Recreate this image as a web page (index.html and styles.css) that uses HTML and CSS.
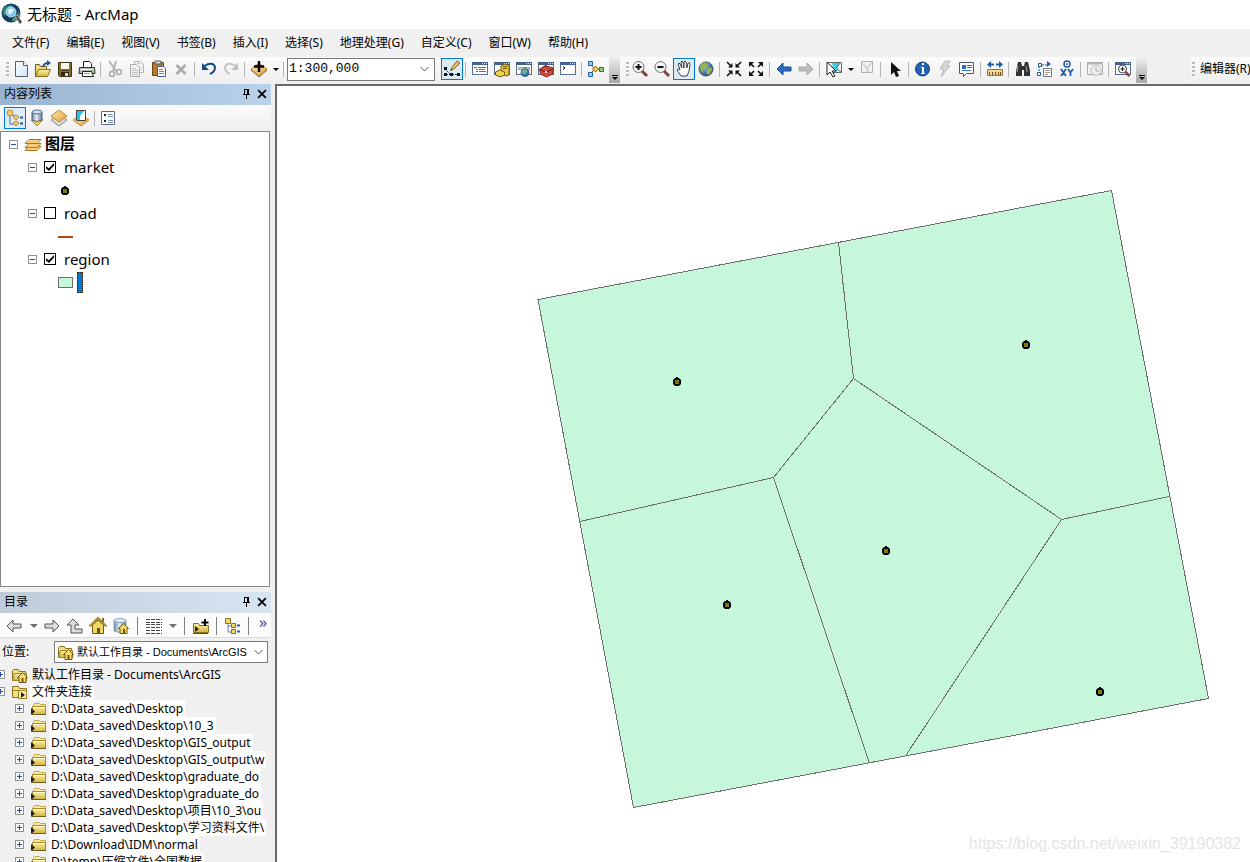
FILE: index.html
```html
<!DOCTYPE html>
<html lang="zh-CN">
<head>
<meta charset="utf-8">
<title>无标题 - ArcMap</title>
<link rel="stylesheet" href="styles.css">
</head>
<body>
<svg class="defs" aria-hidden="true">
  <defs>
    <linearGradient id="gold" x1="0" y1="0" x2="0" y2="1"><stop offset="0" stop-color="#fff3a8"/><stop offset="1" stop-color="#d3b23c"/></linearGradient>
    <linearGradient id="amber" x1="0" y1="0" x2="1" y2="1"><stop offset="0" stop-color="#ffe9a8"/><stop offset="1" stop-color="#e0a040"/></linearGradient>
    <linearGradient id="steel" x1="0" y1="0" x2="1" y2="0"><stop offset="0" stop-color="#6a86a6"/><stop offset=".45" stop-color="#e4eef8"/><stop offset="1" stop-color="#5a7898"/></linearGradient>
    <linearGradient id="page" x1="0" y1="0" x2="1" y2="1"><stop offset="0" stop-color="#fff"/><stop offset="1" stop-color="#cfe2f6"/></linearGradient>
    <radialGradient id="sea" cx=".35" cy=".3" r=".8"><stop offset="0" stop-color="#9cc8f4"/><stop offset="1" stop-color="#12408c"/></radialGradient>
  </defs>
  <symbol id="plus" viewBox="0 0 9 9"><rect x=".5" y=".5" width="8" height="8" fill="#fafafa" stroke="#919191"/><path d="M2 4.500h5M4.500 2v5" stroke="#2d4ea0"/></symbol>
  <symbol id="minus" viewBox="0 0 9 9"><rect x=".5" y=".5" width="8" height="8" fill="#fafafa" stroke="#919191"/><path d="M2 4.500h5" stroke="#2d4ea0"/></symbol>
  <symbol id="folder" viewBox="0 0 18 16"><path d="M3.500 4.500v-1l1-1h5l1 1h5v3h-12z" fill="#f7eaa0" stroke="#c2a94c"/><path d="M2.500 5.500h13v8h-13z" fill="url(#gold)" stroke="#a78a2c"/><path d="M2 13.500h14" stroke="#6d5b20"/><path d="M3 6.500h12" stroke="#fffbd6"/><path d="M1 7l4 3.500L1 14z" fill="#222"/></symbol>
  <symbol id="homefolder" viewBox="0 0 18 16"><path d="M1.500 13.500v-10l1-1h5l1 2h6v3M1.500 13.500h7" fill="#f2e08a" stroke="#8b711c"/><path d="M1.500 13.500l2-7h12v7z" fill="url(#gold)" stroke="#a1852a"/><path d="M6.500 10.500l5-5 5 5h-1.500v5H8v-5z" fill="#f5dc70" stroke="#6f5812"/><path d="M10.500 15v-4h2v4z" fill="#7a5c14"/></symbol>
  <symbol id="connfolder" viewBox="0 0 18 16"><path d="M1.500 13.500v-11h6l1 2h7v9z" fill="#f2e08a" stroke="#8b711c"/><path d="M2 6.500h13" stroke="#a1852a"/><rect x="7.500" y="6.500" width="8" height="8" fill="#fbefa8" stroke="#a1852a"/><path d="M10 8l4 3-4 3z" fill="#222"/></symbol>
  <symbol id="pin" viewBox="0 0 9 10"><path d="M2.500 0v5.500M2 .5h4.500M1 5.500h7M4.500 6v4" stroke="#000" fill="none"/><path d="M6 0v5.500" stroke="#000" stroke-width="2"/></symbol>
  <symbol id="close" viewBox="0 0 9 9"><path d="M1 1l7 7M8 1L1 8" stroke="#000" stroke-width="1.600"/></symbol>
  <symbol id="window" viewBox="0 0 22 22"><rect x="3.500" y="4.500" width="15" height="12" fill="#fff" stroke="#5b6f8d"/><rect x="3" y="4" width="16" height="3" fill="#44618c"/><path d="M13 5.500h1M15 5.500h1M17 5.500h1" stroke="#dce8f6"/></symbol>
  <symbol id="chevron" viewBox="0 0 9 6"><path d="M.5 1l4 4 4-4" fill="none" stroke="#555"/></symbol>
</svg>

<header class="titlebar">
  <svg class="logo" viewBox="0 0 22 22"><circle cx="10" cy="10" r="9.500" fill="#123d63"/><path d="M3 5q5-5 9-2l-3 4-4 2-1 5Q0 10 3 5z" fill="#2f8d77"/><path d="M12 15q5-3 6-7 2 6-2 9-3 2-5 1z" fill="#4d9a6b"/><circle cx="10" cy="9" r="5" fill="#7cc4e4" stroke="#cfe4ec"/><path d="M7 7q3-3 6 0l-2 3-3 2z" fill="#e4f6fb"/><path d="M14 13l2-1 5 7-2 2z" fill="#3c3c3c" stroke="#aaa"/></svg>
  <h1>无标题 - ArcMap</h1>
</header>

<nav class="menubar">
  <button>文件(F)</button><button>编辑(E)</button><button>视图(V)</button><button>书签(B)</button><button>插入(I)</button><button>选择(S)</button><button>地理处理(G)</button><button>自定义(C)</button><button>窗口(W)</button><button>帮助(H)</button>
</nav>

<div class="toolbars">
  <div class="toolbar">
    <span class="grip"></span>
    <button class="tool" aria-label="新建"><svg viewBox="0 0 22 22"><path d="M5.500 3.500h8l4 4v11h-12z" fill="url(#page)" stroke="#555e6c"/><path d="M13.500 3.500v4h4" fill="#fff" stroke="#555e6c"/></svg></button>
    <button class="tool" aria-label="打开"><svg viewBox="0 0 22 22"><path d="M3.500 18.500v-12h4l1 2h6v4" fill="#f2dc80" stroke="#6e5a20"/><path d="M3.500 18.500l3-7h12l-3 7z" fill="url(#gold)" stroke="#8b711c"/><path d="M11 9q1-4 5-4" fill="none" stroke="#1e5896" stroke-width="2"/><path d="M15 2l4 3-4 3z" fill="#1e5896"/></svg></button>
    <button class="tool" aria-label="保存"><svg viewBox="0 0 22 22"><path d="M4.500 4.500h13v14h-12l-1-1z" fill="#82702c" stroke="#3d3413"/><path d="M7 5h8v6H7z" fill="#f8f8f0"/><path d="M7 12.500h8" stroke="#4b4018"/><path d="M7 14h8v4H7z" fill="#302b16"/><path d="M11 15h3v3h-3z" fill="#ddd"/></svg></button>
    <button class="tool" aria-label="打印"><svg viewBox="0 0 22 22"><path d="M7.500 9V3.500h6l2 2V9" fill="#fff" stroke="#222"/><path d="M3.500 9.500h15l.5 6H3z" fill="#b8b8b8" stroke="#333"/><path d="M4 11.500h14" stroke="#eee"/><path d="M6.500 13.500h9l2 5h-11z" fill="#fff" stroke="#222"/><path d="M8 15.500h6" stroke="#999"/><path d="M15 12.500h2" stroke="#59b530"/></svg></button>
    <span class="sep"></span>
    <button class="tool" aria-label="剪切"><svg viewBox="0 0 22 22"><path d="M5 3l8 11M12 3l-3 10" stroke="#b5b5b5" stroke-width="2" fill="none"/><circle cx="8" cy="16" r="2.500" fill="none" stroke="#aaa" stroke-width="1.500"/><circle cx="15" cy="14" r="2.500" fill="none" stroke="#aaa" stroke-width="1.500"/></svg></button>
    <button class="tool" aria-label="复制"><svg viewBox="0 0 22 22"><path d="M8.500 3.500h6l3 3v8h-9z" fill="#f4f4f4" stroke="#b4b4b4"/><path d="M4.500 6.500h6l3 3v9h-9z" fill="#f4f4f4" stroke="#aaa"/><path d="M6 10.500h4M6 12.500h6M6 14.500h6M6 16.500h6M11 5.500h3M15 9.500h1M15 11.500h1" stroke="#bbb"/></svg></button>
    <button class="tool" aria-label="粘贴"><svg viewBox="0 0 22 22"><path d="M4.500 4.500h11v13h-11z" fill="#b8792e" stroke="#6b451a"/><path d="M7 3h6v3H7z" fill="#ddd" stroke="#555"/><path d="M9.500 8.500h6l2 2v8h-8z" fill="#fff" stroke="#44618c"/><path d="M11 11.500h4M11 13.500h5M11 15.500h5" stroke="#5c86c4"/></svg></button>
    <button class="tool" aria-label="删除"><svg viewBox="0 0 22 22"><path d="M6.500 7l9 9M15.500 7l-9 9" stroke="#aaa" stroke-width="2.500"/></svg></button>
    <span class="sep"></span>
    <button class="tool" aria-label="撤销"><svg viewBox="0 0 22 22"><path d="M6 8q9-5 11 1 0 5-5 7" fill="none" stroke="#174c8c" stroke-width="2"/><path d="M4 5v7h7z" fill="#174c8c"/></svg></button>
    <button class="tool" aria-label="恢复"><svg viewBox="0 0 22 22"><path d="M16 8Q7 3 5 9q0 5 5 7" fill="none" stroke="#c5c5c5" stroke-width="2"/><path d="M18 5v7h-7z" fill="#c0c0c0"/></svg></button>
    <span class="sep"></span>
    <button class="tool" aria-label="添加数据"><svg viewBox="0 0 22 22"><path d="M3 11l8-6 8 6-8 7z" fill="url(#amber)" stroke="#bd8832"/><path d="M3 12l8 7 8-7" fill="none" stroke="#7b6b47"/><path d="M11 3v11M6 8.500h10" stroke="#000" stroke-width="2.400"/></svg></button>
    <button class="caret" aria-label="添加数据选项"></button>
    <span class="sep"></span>
    <label class="combo scale"><select aria-label="比例"><option>1:300,000</option></select><svg viewBox="0 0 9 6"><use href="#chevron"/></svg></label>
    <button class="tool on" aria-label="编辑器工具条"><svg viewBox="0 0 22 22"><path d="M4 11l5 5M5 16.500h12" stroke="#333" fill="none" stroke-dasharray="2 1"/><path d="M3 9h3v3H3zM3 15h3v3H3zM9 15h3v3H9zM16 15h3v3h-3z" fill="#111"/><path d="M10 12l1-3 5-6 3 2-6 6z" fill="#e7bd51" stroke="#8a6a3a"/><path d="M16 2l3 2-1 2-3-2z" fill="#e08868"/><path d="M9 13l1-2 1 1z" fill="#111"/></svg></button>
    <span class="sep"></span>
    <button class="tool" aria-label="内容列表"><svg viewBox="0 0 22 22"><use href="#window"/><path d="M5 9.500h3M9 9.500h8M7 11.500h2M10 11.500h6M7 13.500h2M10 13.500h7" stroke="#3b6fb8"/></svg></button>
    <button class="tool" aria-label="目录"><svg viewBox="0 0 22 22"><use href="#window"/><path d="M10 8l4-2 4 1v10l-3 1-5-3z" fill="#e8c83a" stroke="#6d5910"/><path d="M4.500 14l4-2 5 2v3l-4 2-5-2z" fill="#f0d34a" stroke="#6d5910"/><path d="M12 9l4-1M12 11l4-1" stroke="#6d5910"/></svg></button>
    <button class="tool" aria-label="搜索"><svg viewBox="0 0 22 22"><use href="#window"/><path d="M5.500 9.500h11v2h-11z" fill="#e7e7e7" stroke="#999"/><circle cx="12" cy="14.500" r="4" fill="url(#sea)" stroke="#3a6d74"/><path d="M10 12q3-1 4 1l-2 3-2-1z" fill="#6fbb65"/></svg></button>
    <button class="tool" aria-label="工具箱"><svg viewBox="0 0 22 22"><use href="#window"/><path d="M4.500 11l6-3 8 2-1 6-6 3-6-3z" fill="#d3463d" stroke="#8c2a22"/><path d="M5 12l6 2 7-3M8 9q2-3 6 0" fill="none" stroke="#6c1c16"/><path d="M10 13h2v2h-2z" fill="#eee"/></svg></button>
    <button class="tool" aria-label="Python"><svg viewBox="0 0 22 22"><use href="#window"/><path d="M6 8.500l2 1.500-2 1.500" fill="none" stroke="#111"/></svg></button>
    <span class="sep"></span>
    <button class="tool" aria-label="模型构建器"><svg viewBox="0 0 22 22"><path d="M5 6l5 5-5 5M10 11h6" stroke="#555" fill="none"/><path d="M3.500 3.500h4v4h-4zM3.500 14.500h4v4h-4z" fill="#9cccf4" stroke="#1d62ad"/><path d="M7.500 11l3-3 3 3-3 3z" fill="#f5cd44" stroke="#8b6a18"/><path d="M14.500 9.500h4v4h-4z" fill="#8bd080" stroke="#267d2a"/></svg></button>
    <button class="cap" aria-label="工具条选项"></button>
  </div>
  <div class="toolbar">
    <span class="grip"></span>
    <button class="tool" aria-label="放大"><svg viewBox="0 0 22 22"><circle cx="9.500" cy="9" r="5.500" fill="#f3f5f6" stroke="#737373"/><path d="M13 13l5 5" stroke="#874436" stroke-width="3"/><path d="M9.500 6v6M6.500 9h6" stroke="#111" stroke-width="2"/></svg></button>
    <button class="tool" aria-label="缩小"><svg viewBox="0 0 22 22"><circle cx="9.500" cy="9" r="5.500" fill="#f3f5f6" stroke="#737373"/><path d="M13 13l5 5" stroke="#874436" stroke-width="3"/><path d="M6.500 9h6" stroke="#111" stroke-width="2"/></svg></button>
    <button class="tool on" aria-label="平移"><svg viewBox="0 0 22 22"><path d="M8 18l-4-6q1-2 3 0L5 6q1-2 2 0l2 4-1-6q1-2 2 0l1 6V4q1-2 2 0l1 6 1-5q2-1 2 1l-1 7-2 5z" fill="#fff" stroke="#444"/></svg></button>
    <button class="tool" aria-label="全图"><svg viewBox="0 0 22 22"><circle cx="11" cy="11" r="7" fill="url(#sea)" stroke="#3c5772"/><path d="M6 6q4-3 7 0l-2 4-3 1v4q-4-3-2-9zM13 10l4 0q0 5-4 7l-2-3z" fill="#9cb54a"/></svg></button>
    <span class="sep"></span>
    <button class="tool" aria-label="固定比例放大"><svg viewBox="0 0 22 22"><path d="M4 4l4 4M18 4l-4 4M4 18l4-4M18 18l-4-4" stroke="#111" stroke-width="1.600"/><path d="M9.500 5v4.500H5zM12.500 5v4.500H17zM9.500 17v-4.500H5zM12.500 17v-4.500H17z" fill="#111"/></svg></button>
    <button class="tool" aria-label="固定比例缩小"><svg viewBox="0 0 22 22"><path d="M5 5l4 4M17 5l-4 4M5 17l4-4M17 17l-4-4" stroke="#111" stroke-width="1.600"/><path d="M4 9V4h5zM18 9V4h-5zM4 13v5h5zM18 13v5h-5z" fill="#111"/></svg></button>
    <span class="sep"></span>
    <button class="tool" aria-label="上一视图"><svg viewBox="0 0 22 22"><path d="M4 11l6-6v4h8v4h-8v4z" fill="#2d6cc0" stroke="#174a93"/></svg></button>
    <button class="tool" aria-label="下一视图"><svg viewBox="0 0 22 22"><path d="M18 11l-6-6v4H4v4h8v4z" fill="#bcbcbc" stroke="#aaa"/></svg></button>
    <span class="sep"></span>
    <button class="tool" aria-label="选择要素"><svg viewBox="0 0 22 22"><path d="M5.500 4.500h13v10h-13z" fill="#eee" stroke="#666"/><path d="M9 5h7l-2 9h-3z" fill="#37d2e6"/><path d="M13 10l4-5M14 11l4 3" stroke="#666"/><path d="M4 4l9 9H9l3 5-2 1-3-5-3 3z" fill="#fff" stroke="#222"/></svg></button>
    <button class="caret" aria-label="选择选项"></button>
    <button class="tool" aria-label="清除选择"><svg viewBox="0 0 22 22"><path d="M5.500 3.500h11v11h-11z" fill="#f1f1f1" stroke="#b0b0b0"/><path d="M6 5l5 5 5-5M11 10l1 4" fill="none" stroke="#b8b8b8"/></svg></button>
    <span class="sep"></span>
    <button class="tool" aria-label="选择元素"><svg viewBox="0 0 22 22"><path d="M7 4v13l3-3 2 5 3-1-2-5h4z" fill="#111"/></svg></button>
    <span class="sep"></span>
    <button class="tool" aria-label="识别"><svg viewBox="0 0 22 22"><circle cx="10.500" cy="11" r="7" fill="#2462b8" stroke="#1a3f79"/><path d="M10 5h2v2h-2zM9 9h3v6h1v1H9v-1h1v-5H9z" fill="#fff"/></svg></button>
    <button class="tool" aria-label="超链接"><svg viewBox="0 0 22 22"><path d="M11 3h5l-3 5h3l-9 11 3-8H6z" fill="#d5d5d5" stroke="#b9b9b9"/></svg></button>
    <button class="tool" aria-label="HTML弹出窗口"><svg viewBox="0 0 22 22"><path d="M3.500 4.500h14v11h-7l-3 3v-3h-4z" fill="#fff" stroke="#4a5b70"/><path d="M6 7h4v4H6z" fill="#2d6cc0"/><path d="M11 7.500h5M11 9.500h5M6 12.500h9" stroke="#2d6cc0"/></svg></button>
    <span class="sep"></span>
    <button class="tool" aria-label="测量"><svg viewBox="0 0 22 22"><path d="M3.500 11.500h15v6h-15z" fill="#f2d398" stroke="#9b7430"/><path d="M5.500 14v3M8.500 14v3M11.500 14v3M14.500 14v3M16.500 14v3" stroke="#72531c"/><path d="M5 6.500h12" stroke="#1d5da7" stroke-width="2" stroke-dasharray="5 2"/><path d="M3 6.500L7 3v7zM19 6.500L15 3v7z" fill="#1d5da7"/></svg></button>
    <span class="sep"></span>
    <button class="tool" aria-label="查找"><svg viewBox="0 0 22 22"><path d="M6 4h3l1 4h2l1-4h3l2 9v5h-6v-6h-2v6H4v-5z" fill="#333"/><path d="M6 8l-1 6M14 8l1 6" stroke="#aaa"/></svg></button>
    <button class="tool" aria-label="查找路径"><svg viewBox="0 0 22 22"><path d="M5 16V7h9" stroke="#1d5da7" stroke-dasharray="2 1" fill="none"/><path d="M3.500 14.500h3v3h-3zM4.500 5.500h3v3h-3z" fill="#fff" stroke="#1d5da7"/><path d="M13 3l4 3-4 3z" fill="#1d5da7"/><path d="M9.500 10.500h8v8h-8z" fill="#fff" stroke="#777"/><path d="M11 12.500h5M11 14.500h5M11 16.500h3" stroke="#999"/></svg></button>
    <button class="tool" aria-label="转到XY"><svg viewBox="0 0 22 22"><circle cx="11" cy="6" r="3" fill="#fff" stroke="#1d5da7" stroke-width="1.500"/><circle cx="11" cy="6" r="1" fill="#1d5da7"/><path d="M5 11l5 7M10 11l-5 7M12 11l2.500 3.500L17 11M14.500 14v4" stroke="#1d5da7" stroke-width="1.800" fill="none"/></svg></button>
    <span class="sep"></span>
    <button class="tool" aria-label="时间滑块"><svg viewBox="0 0 22 22"><path d="M3.500 4.500h15v12h-15z" fill="#f1f1f1" stroke="#aaa"/><path d="M3 5.500h16" stroke="#b5b5b5" stroke-width="2"/><circle cx="12" cy="12.500" r="5" fill="#eee" stroke="#bbb"/><path d="M12 9v4h3" fill="none" stroke="#aaa"/></svg></button>
    <span class="sep"></span>
    <button class="tool" aria-label="查看器窗口"><svg viewBox="0 0 22 22"><use href="#window"/><circle cx="10.500" cy="11" r="4" fill="#f8f8f8" stroke="#444"/><path d="M10.500 9v4M8.500 11h4" stroke="#111"/><path d="M13.500 14l4 4" stroke="#874436" stroke-width="2.500"/></svg></button>
    <button class="cap" aria-label="工具条选项"></button>
  </div>
  <div class="toolbar editor">
    <span class="grip"></span>
    <button class="textbtn">编辑器(R)</button>
  </div>
</div>

<div class="workspace">
  <aside class="dock">
    <section class="contents">
      <header class="panelhead active"><h2>内容列表</h2><button aria-label="自动隐藏"><svg class="pin"><use href="#pin"/></svg></button><button aria-label="关闭"><svg class="x"><use href="#close"/></svg></button></header>
      <div class="paneltools">
        <button class="tool on" aria-label="按绘制顺序列出"><svg viewBox="0 0 22 22"><path d="M6 8v9h4M8 7l4 4" stroke="#8095ad" fill="none" stroke-width="1.500"/><circle cx="6" cy="6" r="3" fill="#f3c96f" stroke="#bd8832"/><path d="M9 10l3-2 3 2-3 3zM9 16l3-2 3 2-3 3z" fill="#f3c96f" stroke="#bd8832"/><path d="M16 10.500h3M16 16.500h3" stroke="#2b5c93" stroke-width="2"/></svg></button>
        <button class="tool" aria-label="按源列出"><svg viewBox="0 0 22 22"><path d="M5 13h12l-6 6z" fill="#f1c766" stroke="#b48938"/><path d="M6 5v8q5 3 10 0V5z" fill="url(#steel)" stroke="#52677e"/><ellipse cx="11" cy="5" rx="5" ry="2" fill="#d4e2f1" stroke="#52677e"/></svg></button>
        <button class="tool" aria-label="按可见性列出"><svg viewBox="0 0 22 22"><path d="M3 13l8-6 8 6-8 6z" fill="#d9d9d9" stroke="#888"/><path d="M3 9l8-6 8 6-8 6z" fill="url(#amber)" stroke="#bd8832"/></svg></button>
        <button class="tool" aria-label="按选择列出"><svg viewBox="0 0 22 22"><path d="M3 13l8-5 8 5-8 6z" fill="url(#amber)" stroke="#bd8832"/><path d="M6.500 3.500h9v10h-9z" fill="#fff" stroke="#444"/><path d="M7 4h7l-4 5v4H7z" fill="#25c4dd"/></svg></button>
        <span class="sep"></span>
        <button class="tool" aria-label="选项"><svg viewBox="0 0 22 22"><path d="M4.500 4.500h13v13h-13z" fill="#fff" stroke="#5f6f86"/><path d="M7 7h2v2H7zM7 13h2v2H7z" fill="#222"/><path d="M11 7.500h5M11 9.500h5M11 13.500h5M11 15.500h5" stroke="#7a93b4"/></svg></button>
      </div>
      <div class="toc">
        <div class="row root"><svg class="box"><use href="#minus"/></svg><svg class="layers" viewBox="0 0 18 16"><g fill="#f6cd7c" stroke="#a9752a"><path d="M1 13.500l4-4h12l-4 4z"/><path d="M1 10.500l4-4h12l-4 4z"/><path d="M1 6.500l4-4h12l-4 4z"/></g></svg><b>图层</b></div>
        <div class="row"><svg class="box"><use href="#minus"/></svg><label><input type="checkbox" checked>market</label></div>
        <div class="row sym"><svg class="dot" viewBox="0 0 8 9"><path d="M2 1h1V0h2v1h1l2 2v4L6 9H2L0 7V3z" fill="#000"/><path d="M2 3h4v4H2z" fill="#7a7a10"/></svg></div>
        <div class="row"><svg class="box"><use href="#minus"/></svg><label><input type="checkbox">road</label></div>
        <div class="row sym"><span class="line"></span></div>
        <div class="row"><svg class="box"><use href="#minus"/></svg><label><input type="checkbox" checked>region</label></div>
        <div class="row sym"><span class="fill"></span><span class="cursor"></span></div>
      </div>
    </section>
    <section class="catalog">
      <header class="panelhead"><h2>目录</h2><button aria-label="自动隐藏"><svg class="pin"><use href="#pin"/></svg></button><button aria-label="关闭"><svg class="x"><use href="#close"/></svg></button></header>
      <div class="paneltools white">
        <button class="tool" aria-label="后退"><svg viewBox="0 0 22 22"><path d="M4 11l6-6v4h8v4h-8v4z" fill="#ddd" stroke="#555"/></svg></button>
        <button class="caret gray" aria-label="后退选项"></button>
        <button class="tool" aria-label="前进"><svg viewBox="0 0 22 22"><path d="M18 11l-6-6v4H4v4h8v4z" fill="#ddd" stroke="#555"/></svg></button>
        <button class="tool" aria-label="向上"><svg viewBox="0 0 22 22"><path d="M9 4l6 6h-4v4h7v4H7v-8H3z" fill="#ddd" stroke="#555"/></svg></button>
        <button class="tool" aria-label="主目录"><svg viewBox="0 0 22 22"><path d="M5.500 10v8.500h11V10L11 5z" fill="#f3d765" stroke="#6f5812"/><path d="M2.500 11.500L11 3l8.500 8.500" fill="none" stroke="#a98a2c" stroke-width="2"/><path d="M15 3h2v4h-2z" fill="#8b6d17"/><path d="M10 13h3v5h-3z" fill="#6f5812"/></svg></button>
        <button class="tool" aria-label="默认地理数据库"><svg viewBox="0 0 22 22"><path d="M4 5v11q6 3 12 0V5z" fill="url(#steel)" stroke="#8fa5c0"/><ellipse cx="10" cy="5.500" rx="6" ry="2" fill="#e4eef9" stroke="#8fa5c0"/><path d="M8.500 13.500l5-5 5 5h-1.500v5h-7v-5z" fill="#f3d765" stroke="#6f5812"/><path d="M13 14h2v4h-2z" fill="#6f5812"/></svg></button>
        <span class="sep"></span>
        <button class="tool wide" aria-label="切换内容面板"><svg viewBox="0 0 22 22"><path d="M3 4.500h16M3 7.500h16M3 9.500h16M3 12.500h16M3 15.500h16M3 18.500h16" stroke="#444" stroke-dasharray="4 1"/></svg></button>
        <button class="caret gray" aria-label="视图选项"></button>
        <span class="sep"></span>
        <button class="tool wide" aria-label="连接到文件夹"><svg viewBox="0 0 22 22"><path d="M3.500 17.500v-9h5l1 2h9v7z" fill="url(#gold)" stroke="#8b711c"/><path d="M3 18.500h15" stroke="#5c4b18"/><path d="M5 11l4 3-4 3z" fill="#222"/><path d="M15 4v7M11.500 7.500h7" stroke="#000" stroke-width="2"/></svg></button>
        <span class="sep"></span>
        <button class="tool wide" aria-label="切换目录树"><svg viewBox="0 0 22 22"><path d="M6 8v9h4M6 11h4" stroke="#6c7f96" fill="none"/><path d="M3.500 3.500h5v5h-5zM9.500 8.500h4v4h-4zM9.500 14.500h4v4h-4z" fill="#f1d767" stroke="#8b711c"/><path d="M15 10.500h3M15 16.500h3" stroke="#2b5c93" stroke-width="2"/></svg></button>
        <span class="sep"></span>
        <button class="more" aria-label="更多">»</button>
      </div>
      <div class="location">
        <label for="loc">位置:</label>
        <div class="combo place"><svg class="ico"><use href="#homefolder"/></svg><select id="loc"><option>默认工作目录 - Documents\ArcGIS</option></select><svg viewBox="0 0 9 6"><use href="#chevron"/></svg></div>
      </div>
      <ul class="tree">
        <li class="top"><svg class="box"><use href="#plus"/></svg><svg class="ico"><use href="#homefolder"/></svg><span>默认工作目录 - Documents\ArcGIS</span></li>
        <li class="top"><svg class="box"><use href="#plus"/></svg><svg class="ico"><use href="#connfolder"/></svg><span class="lit">文件夹连接</span></li>
        <li><svg class="box"><use href="#plus"/></svg><svg class="ico"><use href="#folder"/></svg><span class="lit">D:\Data_saved\Desktop</span></li>
        <li><svg class="box"><use href="#plus"/></svg><svg class="ico"><use href="#folder"/></svg><span class="lit">D:\Data_saved\Desktop\10_3</span></li>
        <li><svg class="box"><use href="#plus"/></svg><svg class="ico"><use href="#folder"/></svg><span class="lit">D:\Data_saved\Desktop\GIS_output</span></li>
        <li><svg class="box"><use href="#plus"/></svg><svg class="ico"><use href="#folder"/></svg><span class="lit">D:\Data_saved\Desktop\GIS_output\w</span></li>
        <li><svg class="box"><use href="#plus"/></svg><svg class="ico"><use href="#folder"/></svg><span class="lit">D:\Data_saved\Desktop\graduate_do</span></li>
        <li><svg class="box"><use href="#plus"/></svg><svg class="ico"><use href="#folder"/></svg><span class="lit">D:\Data_saved\Desktop\graduate_do</span></li>
        <li><svg class="box"><use href="#plus"/></svg><svg class="ico"><use href="#folder"/></svg><span class="lit">D:\Data_saved\Desktop\项目\10_3\ou</span></li>
        <li><svg class="box"><use href="#plus"/></svg><svg class="ico"><use href="#folder"/></svg><span class="lit">D:\Data_saved\Desktop\学习资料文件\</span></li>
        <li><svg class="box"><use href="#plus"/></svg><svg class="ico"><use href="#folder"/></svg><span class="lit">D:\Download\IDM\normal</span></li>
        <li><svg class="box"><use href="#plus"/></svg><svg class="ico"><use href="#folder"/></svg><span class="lit">D:\temp\压缩文件\全国数据</span></li>
      </ul>
    </section>
  </aside>
  <main class="map">
    <svg class="canvas" viewBox="277 86 973 776" preserveAspectRatio="xMinYMin meet">
      <path d="M538 299.500L1111.500 190.500 1208.500 698.500 633.500 807.500z" fill="#c7f7da"/>
      <g fill="none" stroke="#6e6e6e" shape-rendering="crispEdges">
        <path d="M538 299.500L1111.500 190.500 1208.500 698.500 633.500 807.500z"/>
        <path d="M838.500 242.500L853.500 378.500 773.500 477.500 580 521.500M853.500 378.500L1061.500 519.500 1169 496.500M1061.500 519.500L905.500 756M773.500 477.500L869.500 763.500"/>
      </g>
      <defs><g id="market"><path d="M-2-4h1v-1h2v1h1l2 2v4l-2 2h-4l-2-2v-4z" fill="#000"/><path d="M-2-2h4v4h-4z" fill="#7a7a10"/></g></defs>
      <use href="#market" x="677" y="382"/><use href="#market" x="1026" y="345"/><use href="#market" x="886" y="551"/><use href="#market" x="727" y="605"/><use href="#market" x="1100" y="692"/>
    </svg>
    <span class="watermark">https://blog.csdn.net/weixin_39190382</span>
  </main>
</div>
</body>
</html>
```

FILE: styles.css
```css
* { box-sizing: border-box; }

body {
  margin: 0;
  height: 100vh;
  display: flex;
  flex-direction: column;
  overflow: hidden;
  background: #f0f0f0;
  color: #000;
  font: 12px/16px "Noto Sans", "Noto Sans CJK SC", sans-serif;
}

button, select, input {
  margin: 0;
  padding: 0;
  border: 0;
  background: none;
  color: inherit;
  font: inherit;
}

h1, h2 { margin: 0; font-weight: 400; }
svg { display: block; flex: none; }
.defs { width: 0; height: 0; position: absolute; }

/* Title and menus */
.titlebar {
  display: flex;
  align-items: center;
  gap: 4px;
  height: 29px;
  flex: none;
  padding: 0 0 2px 1px;
  background: #fff;
}
.titlebar h1 { font-size: 15px; line-height: 20px; }
.logo { width: 22px; height: 22px; }

.menubar {
  display: flex;
  gap: 1px;
  height: 28px;
  flex: none;
  padding-left: 4px;
  white-space: nowrap;
}
.menubar button { padding: 0 8px; }

/* Tool strips */
.toolbars {
  display: flex;
  height: 27px;
  flex: none;
  white-space: nowrap;
  overflow: hidden;
}
.toolbar {
  display: flex;
  align-items: center;
  flex: none;
  height: 26px;
  padding: 0 0 2px 3px;
  background: linear-gradient(#fbfbfb, #efefef);
}
.toolbar + .toolbar { padding-left: 4px; }
.toolbar.editor { margin-left: auto; width: 59px; padding-left: 1px; }
.grip {
  width: 3px;
  height: 14px;
  margin-right: 1px;
  margin-left: 3px;
  flex: none;
  background: repeating-linear-gradient(#bbb 0 2px, transparent 2px 4px);
}
.toolbar + .toolbar .grip { margin-left: 2px; margin-right: 0; }
.toolbar.editor .grip { margin-left: 0; margin-right: 5px; }
.tool { width: 22px; height: 22px; flex: none; }
.tool svg { width: 22px; height: 22px; }
.tool.on {
  background: #dcebf8;
  box-shadow: inset 0 0 0 1px #0078d7;
}
.sep {
  width: 6px;
  height: 15px;
  flex: none;
  background: linear-gradient(#b4b4b4, #b4b4b4) 2px 0 / 1px 100% no-repeat;
}
.caret {
  display: grid;
  place-content: center;
  width: 11px;
  height: 22px;
  flex: none;
}
.caret::after {
  content: "";
  border: 3px solid transparent;
  border-top-color: currentColor;
  border-bottom: 0;
}
.caret.gray { color: #6e6e6e; }
.caret.gray::after { border-width: 4px 4px 0; }
.cap {
  display: grid;
  align-self: flex-start;
  align-content: end;
  justify-content: center;
  gap: 1px;
  width: 11px;
  height: 26px;
  margin-left: 2px;
  padding-bottom: 3px;
  background: linear-gradient(#f0f0f0, #a6a6a6);
}
.cap::before { content: ""; width: 6px; height: 1px; background: #000; }
.cap::after {
  content: "";
  border: 3px solid transparent;
  border-top-color: #000;
  border-bottom: 0;
}

.combo {
  display: flex;
  align-items: center;
  border: 1px solid #7a7a7a;
  background: #fff;
}
.combo select { flex: 1; min-width: 0; appearance: none; outline: 0; }
.combo > svg:last-child { width: 9px; height: 6px; }
.scale { width: 148px; height: 23px; margin-right: 6px; padding: 0 5px 0 1px; }
.scale select { font: 13px/20px "Liberation Mono", monospace; }

/* Docked panels */
.workspace { display: flex; flex: 1; min-height: 0; }
.dock {
  display: flex;
  flex-direction: column;
  width: 275px;
  flex: none;
  padding-right: 4px;
}
.contents { display: flex; flex-direction: column; flex: 1; min-height: 0; }
.catalog { height: 270px; margin-top: 5px; flex: none; overflow: hidden; }

.panelhead {
  display: flex;
  align-items: center;
  gap: 6px;
  height: 21px;
  flex: none;
  padding: 0 4px 2px;
  background: linear-gradient(90deg, #bfcddb, #d7e4f2);
}
.panelhead.active { background: linear-gradient(90deg, #99b4d1, #b9d1ea); }
.panelhead h2 { flex: 1; font-size: 12px; line-height: 20px; }
.pin { width: 9px; height: 10px; }
.x { width: 10px; height: 10px; }

.paneltools {
  display: flex;
  align-items: center;
  height: 26px;
  flex: none;
  padding-left: 4px;
  background: linear-gradient(#fbfbfb, #efefef);
}
.paneltools .tool + .sep { margin-right: -1px; }
.paneltools.white { height: 25px; padding: 1px 0 0 3px; background: #fcfcfc; border-bottom: 1px solid #dcdcdc; }
.white .tool { width: 23px; }
.paneltools.white .sep {
  margin: 0 2px;
  height: 18px;
  background-image: linear-gradient(#808080, #808080);
}
.white .tool.wide { width: 22px; }
.white .caret { width: 15px; }
.more { color: #4646a8; font-size: 16px; height: 22px; line-height: 14px; padding: 0 0 8px 5px; }

.toc {
  flex: 1;
  margin-right: 1px;
  padding-top: 1px;
  border: 1px solid #828790;
  background: #fff;
  font-size: 15px;
  line-height: 20px;
}
.toc .row { display: flex; align-items: center; height: 23px; padding-left: 27px; }
.toc .root { padding-left: 8px; gap: 6px; }
.toc .sym { padding-left: 57px; gap: 4px; }
.box { width: 9px; height: 9px; }
.layers { width: 18px; height: 16px; }
.toc b { margin-left: -3px; padding-bottom: 3px; }
.toc label { display: flex; align-items: center; gap: 8px; margin-left: 7px; padding-bottom: 1px; }
.toc input {
  appearance: none;
  display: grid;
  place-content: center;
  width: 12px;
  height: 12px;
  border: 1px solid #000;
  background: #fff;
}
.toc input:checked::after {
  content: "";
  width: 8px;
  height: 8px;
  background: #000;
  clip-path: polygon(0 40%, 36% 66%, 100% 0, 100% 32%, 38% 100%, 0 70%);
}
.dot { width: 8px; height: 9px; margin-left: 3px; }
.line { width: 15px; height: 2px; background: #b04a0c; }
.fill { width: 15px; height: 11px; border: 1px solid #6e6e6e; background: #c7f7da; }
.cursor { width: 6px; height: 21px; border: 1px dotted #331a00; background: #0078d7; }

.location { display: flex; align-items: center; height: 27px; padding: 0 3px 0 2px; }
.location label { width: 52px; flex: none; }
.place { flex: 1; height: 22px; min-width: 0; padding: 0 4px 0 2px; gap: 2px; }
.place select { font: 11px/18px "Liberation Sans", "Noto Sans CJK SC", sans-serif; }
.ico { width: 18px; height: 16px; }

.tree { list-style: none; margin: 1px 5px 0 0; padding: 0; }
.tree li {
  display: flex;
  align-items: center;
  height: 17px;
  padding-left: 15px;
  overflow: hidden;
  line-height: 17px;
  white-space: nowrap;
}
.tree .ico { margin-left: 6px; }
.tree span { margin-left: 1px; padding: 0 2px; }
.tree .lit { background: #fff; }
.tree .top { padding-left: 0; }
.tree .top .box { margin-left: -4px; }

/* Map view */
.map {
  position: relative;
  flex: 1;
  min-width: 0;
  border-top: 2px solid #696969;
  border-left: 2px solid #696969;
  background: #fff;
}
.canvas { width: 100%; height: 100%; }
.watermark {
  position: absolute;
  right: 9px;
  bottom: 8px;
  color: #e4e4e4;
  font: 16px/20px "Liberation Sans", sans-serif;
}
```
